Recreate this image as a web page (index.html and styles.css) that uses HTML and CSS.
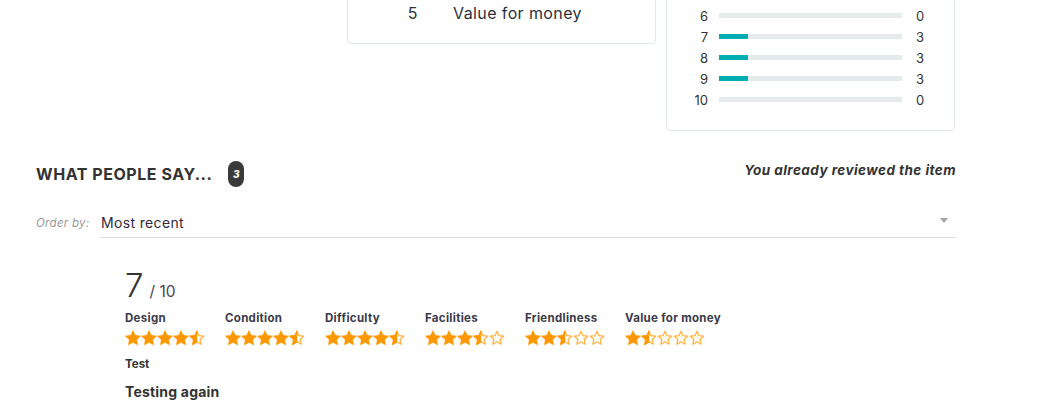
FILE: index.html
```html
<!DOCTYPE html>
<html>
<head>
<meta charset="utf-8">
<link rel="stylesheet" href="styles.css">
</head>
<body>
<svg class="defs" width="0" height="0" aria-hidden="true">
  <symbol id="star-full" viewBox="0 0 16 16">
    <path d="M8 0.4 L10.35 5.3 L15.7 5.95 L11.75 9.75 L12.8 15.1 L8 12.5 L3.2 15.1 L4.25 9.75 L0.3 5.95 L5.65 5.3 Z" fill="#ff9800" stroke="#ff9800" stroke-width="0.4" stroke-linejoin="round"/>
  </symbol>
  <symbol id="star-empty" viewBox="0 0 16 16">
    <path d="M8 1.3 L9.95 5.65 L14.7 6.25 L11.15 9.55 L12.15 14.2 L8 11.8 L3.85 14.2 L4.85 9.55 L1.3 6.25 L6.05 5.65 Z" fill="#fff" stroke="#ffb347" stroke-width="1.3" stroke-linejoin="round"/>
  </symbol>
  <symbol id="star-half" viewBox="0 0 16 16">
    <path d="M8 1.3 L9.95 5.65 L14.7 6.25 L11.15 9.55 L12.15 14.2 L8 11.8 L3.85 14.2 L4.85 9.55 L1.3 6.25 L6.05 5.65 Z" fill="#fff" stroke="#ffb347" stroke-width="1.3" stroke-linejoin="round"/>
    <path d="M8 0.4 L8 12.5 L3.2 15.1 L4.25 9.75 L0.3 5.95 L5.65 5.3 Z" fill="#ff9800" stroke="#ff9800" stroke-width="0.4" stroke-linejoin="round"/>
  </symbol>
</svg>

<div class="page">
  <div class="top-row">
    <div class="spacer"></div>
    <div class="card card-criteria">
      <div class="crit-row"><span class="crit-num">1</span><span class="crit-name">Design</span></div>
      <div class="crit-row"><span class="crit-num">2</span><span class="crit-name">Condition</span></div>
      <div class="crit-row"><span class="crit-num">3</span><span class="crit-name">Difficulty</span></div>
      <div class="crit-row"><span class="crit-num">4</span><span class="crit-name">Facilities</span></div>
      <div class="crit-row"><span class="crit-num">5</span><span class="crit-name">Value for money</span></div>
    </div>
    <div class="card card-dist">
      <div class="dist-row"><span class="dist-label">1</span><span class="bar"><span class="bar-fill" style="width:0%"></span></span><span class="dist-count">0</span></div>
      <div class="dist-row"><span class="dist-label">2</span><span class="bar"><span class="bar-fill" style="width:0%"></span></span><span class="dist-count">0</span></div>
      <div class="dist-row"><span class="dist-label">3</span><span class="bar"><span class="bar-fill" style="width:0%"></span></span><span class="dist-count">0</span></div>
      <div class="dist-row"><span class="dist-label">4</span><span class="bar"><span class="bar-fill" style="width:0%"></span></span><span class="dist-count">0</span></div>
      <div class="dist-row"><span class="dist-label">5</span><span class="bar"><span class="bar-fill" style="width:0%"></span></span><span class="dist-count">0</span></div>
      <div class="dist-row"><span class="dist-label">6</span><span class="bar"><span class="bar-fill" style="width:0%"></span></span><span class="dist-count">0</span></div>
      <div class="dist-row"><span class="dist-label">7</span><span class="bar"><span class="bar-fill" style="width:16%"></span></span><span class="dist-count">3</span></div>
      <div class="dist-row"><span class="dist-label">8</span><span class="bar"><span class="bar-fill" style="width:16%"></span></span><span class="dist-count">3</span></div>
      <div class="dist-row"><span class="dist-label">9</span><span class="bar"><span class="bar-fill" style="width:16%"></span></span><span class="dist-count">3</span></div>
      <div class="dist-row"><span class="dist-label">10</span><span class="bar"><span class="bar-fill" style="width:0%"></span></span><span class="dist-count">0</span></div>
    </div>
  </div>

  <div class="say-head">
    <div class="say-title">
      <h2>WHAT PEOPLE SAY...</h2>
      <span class="badge">3</span>
    </div>
    <div class="already">You already reviewed the item</div>
  </div>

  <div class="order">
    <span class="order-label">Order by:</span>
    <div class="select">
      <span>Most recent</span>
      <span class="caret"></span>
    </div>
  </div>

  <div class="review">
    <div class="score"><span class="score-big">7</span><span class="score-max">/ 10</span></div>
    <div class="ratings">
      <div class="rating">
        <div class="rating-label">Design</div>
        <div class="stars">
          <svg class="star"><use href="#star-full"/></svg><svg class="star"><use href="#star-full"/></svg><svg class="star"><use href="#star-full"/></svg><svg class="star"><use href="#star-full"/></svg><svg class="star"><use href="#star-half"/></svg>
        </div>
      </div>
      <div class="rating">
        <div class="rating-label">Condition</div>
        <div class="stars">
          <svg class="star"><use href="#star-full"/></svg><svg class="star"><use href="#star-full"/></svg><svg class="star"><use href="#star-full"/></svg><svg class="star"><use href="#star-full"/></svg><svg class="star"><use href="#star-half"/></svg>
        </div>
      </div>
      <div class="rating">
        <div class="rating-label">Difficulty</div>
        <div class="stars">
          <svg class="star"><use href="#star-full"/></svg><svg class="star"><use href="#star-full"/></svg><svg class="star"><use href="#star-full"/></svg><svg class="star"><use href="#star-full"/></svg><svg class="star"><use href="#star-half"/></svg>
        </div>
      </div>
      <div class="rating">
        <div class="rating-label">Facilities</div>
        <div class="stars">
          <svg class="star"><use href="#star-full"/></svg><svg class="star"><use href="#star-full"/></svg><svg class="star"><use href="#star-full"/></svg><svg class="star"><use href="#star-half"/></svg><svg class="star"><use href="#star-empty"/></svg>
        </div>
      </div>
      <div class="rating">
        <div class="rating-label">Friendliness</div>
        <div class="stars">
          <svg class="star"><use href="#star-full"/></svg><svg class="star"><use href="#star-full"/></svg><svg class="star"><use href="#star-half"/></svg><svg class="star"><use href="#star-empty"/></svg><svg class="star"><use href="#star-empty"/></svg>
        </div>
      </div>
      <div class="rating">
        <div class="rating-label">Value for money</div>
        <div class="stars">
          <svg class="star"><use href="#star-full"/></svg><svg class="star"><use href="#star-half"/></svg><svg class="star"><use href="#star-empty"/></svg><svg class="star"><use href="#star-empty"/></svg><svg class="star"><use href="#star-empty"/></svg>
        </div>
      </div>
    </div>
    <div class="review-title">Test</div>
    <div class="review-text">Testing again</div>
  </div>
</div>
</body>
</html>
```

FILE: styles.css
```css
html, body {
  margin: 0;
  padding: 0;
  background: #fff;
  overflow: hidden;
}
body {
  font-family: Inter, "Open Sans", "Liberation Sans", sans-serif;
  color: #333;
}
.defs {
  position: absolute;
  width: 0;
  height: 0;
  overflow: hidden;
}
.page {
  width: 920px;
  margin-left: 36px;
}
.top-row {
  display: flex;
  align-items: flex-start;
  margin-top: -121px;
}
.spacer {
  width: 311px;
  flex: none;
}
.card {
  border: 1px solid #e3e8e8;
  border-radius: 4px;
  box-sizing: border-box;
  background: #fff;
}
.card-criteria {
  width: 309px;
  padding: 20px 0 18px;
}
.crit-row {
  display: flex;
  align-items: center;
  height: 25px;
  font-size: 16px;
  letter-spacing: 0.4px;
  color: #2b2f3a;
}
.crit-num {
  width: 70px;
  text-align: right;
  flex: none;
}
.crit-name {
  margin-left: 35px;
}
.card-dist {
  width: 289px;
  margin-left: 10px;
  padding: 20px 0 20px 19px;
}
.dist-row {
  display: flex;
  align-items: center;
  height: 21px;
  font-size: 13px;
  color: #333;
}
.dist-label {
  width: 22px;
  text-align: right;
  flex: none;
}
.bar {
  width: 183px;
  height: 5px;
  margin-left: 11px;
  background: #e5eaea;
  display: flex;
}
.bar-fill {
  background: #00adb3;
  height: 5px;
}
.dist-count {
  margin-left: 14px;
}

.say-head {
  display: flex;
  justify-content: space-between;
  align-items: center;
  margin-top: 30px;
}
.say-title {
  display: flex;
  align-items: center;
}
.say-title h2 {
  margin: 0;
  font-size: 16px;
  font-weight: 700;
  color: #333;
  letter-spacing: 0.55px;
}
.badge {
  margin-left: 16px;
  width: 16px;
  height: 26px;
  border-radius: 8px;
  background: #3a3a3a;
  color: #fff;
  font-size: 10px;
  font-weight: 800;
  font-style: italic;
  display: flex;
  align-items: center;
  justify-content: center;
}
.already {
  font-size: 13.5px;
  font-weight: 700;
  font-style: italic;
  color: #333;
  letter-spacing: 0.45px;
  margin-top: -8px;
}

.order {
  display: flex;
  align-items: center;
  margin-top: 21px;
}
.order-label {
  width: 64px;
  flex: none;
  font-size: 11.5px;
  font-style: italic;
  color: #999;
  letter-spacing: 0.3px;
}
.select {
  flex: 1;
  display: flex;
  justify-content: space-between;
  align-items: center;
  height: 30px;
  border-bottom: 1px solid #dddddd;
  font-size: 14px;
  letter-spacing: 0.35px;
  color: #32293a;
  padding-left: 1px;
  box-sizing: border-box;
}
.caret {
  width: 0;
  height: 0;
  border-left: 4px solid transparent;
  border-right: 4px solid transparent;
  border-top: 5px solid #a5a5a5;
  margin-right: 8px;
  margin-top: -4px;
}

.review {
  margin-left: 89px;
  margin-top: 30px;
}
.score {
  display: flex;
  align-items: baseline;
  height: 34px;
}
.score-big {
  font-size: 33px;
  font-weight: 300;
  color: #333;
  line-height: 34px;
}
.score-max {
  font-size: 15.5px;
  color: #4a4350;
  margin-left: 6px;
}
.ratings {
  display: flex;
  margin-top: 9px;
}
.rating {
  width: 100px;
}
.rating-label {
  font-size: 11.5px;
  font-weight: 700;
  color: #3a3a48;
  line-height: 14px;
  letter-spacing: 0.3px;
}
.stars {
  display: flex;
  margin-top: 5px;
  height: 16px;
}
.star {
  width: 16px;
  height: 16px;
  flex: none;
}
.review-title {
  font-size: 11.5px;
  font-weight: 700;
  color: #333;
  margin-top: 11px;
}
.review-text {
  font-size: 14px;
  letter-spacing: 0.2px;
  font-weight: 700;
  color: #333;
  margin-top: 12px;
}
```
